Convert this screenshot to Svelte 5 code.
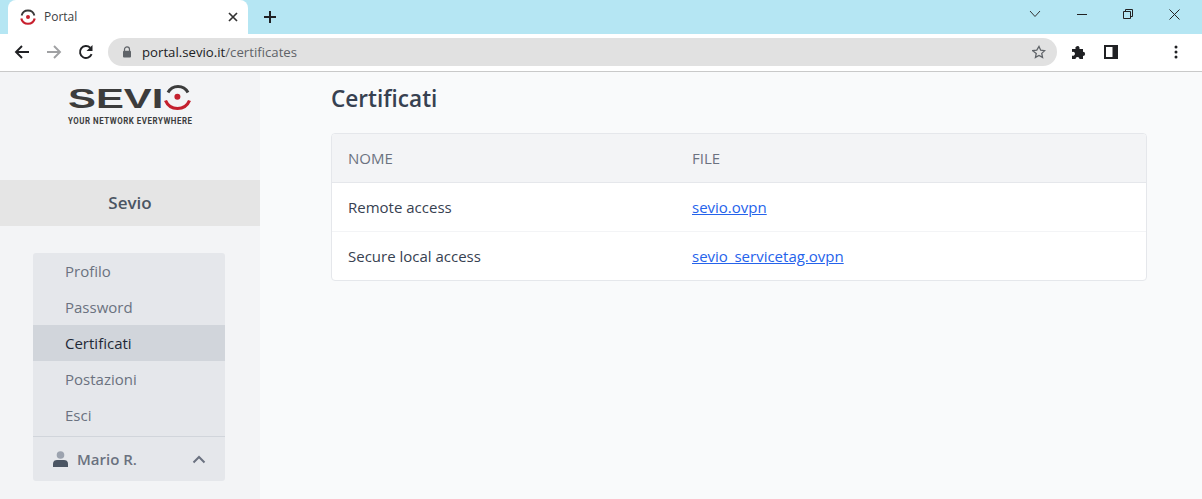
<script>
	let menu = ["Profilo", "Password", "Certificati", "Postazioni", "Esci"];
	let active = "Certificati";
	let certs = [
		["Remote access", "sevio.ovpn"],
		["Secure local access", "sevio_servicetag.ovpn"],
	];
</script>

<div class="window">
	<div class="tabstrip">
		<div class="tab">
			<svg class="favicon" width="16" height="16" viewBox="0 0 16 16">
				<path d="M1.6 6.5A6.6 6.6 0 0 1 14.4 6.5" fill="none" stroke="#3a3a3a" stroke-width="1.8"/>
				<path d="M1.3 9.5A6.9 6.9 0 0 0 14.7 9.5" fill="none" stroke="#c8202e" stroke-width="2.2"/>
				<circle cx="8" cy="8" r="2" fill="#c8202e"/>
			</svg>
			<span class="tabtitle">Portal</span>
			<svg class="tabclose" width="10" height="10" viewBox="0 0 10 10">
				<path d="M1 1L9 9M9 1L1 9" stroke="#333" stroke-width="1.7"/>
			</svg>
		</div>
		<svg class="newtab" width="12" height="12" viewBox="0 0 12 12">
			<path d="M6 0V12M0 6H12" stroke="#202124" stroke-width="2"/>
		</svg>
		<div class="wincontrols">
			<svg width="12" height="8" viewBox="0 0 12 8"><path d="M1 1L6 6.5L11 1" fill="none" stroke="#333" stroke-width="1"/></svg>
			<svg width="10" height="10" viewBox="0 0 10 10"><path d="M0 5.5H10" stroke="#222" stroke-width="1"/></svg>
			<svg width="10" height="10" viewBox="0 0 10 10"><path d="M.5 2.5H7.5V9.5H.5ZM2.5 2.5V.5H9.5V7.5H7.5" fill="none" stroke="#222" stroke-width="1"/></svg>
			<svg width="11" height="11" viewBox="0 0 11 11"><path d="M.5 .5L10.5 10.5M10.5 .5L.5 10.5" stroke="#222" stroke-width="1"/></svg>
		</div>
	</div>

	<div class="toolbar">
		<svg class="navicon" width="16" height="16" viewBox="0 0 16 16"><path d="M15 8H2M8 2L2 8L8 14" fill="none" stroke="#202124" stroke-width="1.9"/></svg>
		<svg class="navicon" width="16" height="16" viewBox="0 0 16 16"><path d="M1 8H14M8 2L14 8L8 14" fill="none" stroke="#a0a1a3" stroke-width="1.9"/></svg>
		<svg class="navicon" width="16" height="16" viewBox="0 0 16 16"><path d="M13.6 10.2A6 6 0 1 1 12.2 3.7" fill="none" stroke="#202124" stroke-width="1.9"/><path d="M14.5 1V7H8.5Z" fill="#202124"/></svg>
		<div class="omnibox">
			<svg width="10" height="12" viewBox="0 0 10 12"><path d="M2.5 5V3.4a2.5 2.5 0 0 1 5 0V5" fill="none" stroke="#5f6368" stroke-width="1.2"/><rect x="1" y="4.8" width="8" height="6.6" rx="1" fill="#5f6368"/></svg>
			<span class="url"><span class="host">portal.sevio.it</span>/certificates</span>
			<svg class="star" width="14" height="14" viewBox="0 0 24 24"><path d="M12 2.5l2.9 6.4 6.9.8-5.1 4.7 1.4 6.9-6.1-3.5-6.1 3.5 1.4-6.9L1.2 9.7l7-.8z" fill="none" stroke="#5f6368" stroke-width="2.2"/></svg>
		</div>
		<svg class="puzzle" width="16" height="16" viewBox="0 0 16 16"><path d="M1 5H4.5A2 2 0 1 1 8.5 3.5V5H12V7.8A2 2 0 1 1 12 12V15H8.5A2 2 0 1 0 4.5 15H1V11.5A2 2 0 1 0 1 8Z" fill="#202124"/></svg>
		<svg class="panel" width="14" height="14" viewBox="0 0 14 14"><path d="M0 0H14V14H0ZM2 2V12H8.5V2Z" fill="#202124" fill-rule="evenodd"/></svg>
		<svg class="kebab" width="4" height="14" viewBox="0 0 4 14"><circle cx="2" cy="2" r="1.5" fill="#202124"/><circle cx="2" cy="7" r="1.5" fill="#202124"/><circle cx="2" cy="12" r="1.5" fill="#202124"/></svg>
	</div>

	<div class="page">
		<aside class="sidebar">
			<div class="logo">
				<svg width="124" height="41" viewBox="0 0 124 41">
					<g transform="scale(1.55 1)">
						<text x="0" y="23" class="logoword">SEVI</text>
					</g>
					<path d="M100 7.5A11.3 11.3 0 0 1 120 7.5" fill="none" stroke="#3c3c3c" stroke-width="3"/>
					<path d="M97.5 15.5A13 13 0 0 0 121.5 15.5" fill="none" stroke="#c4202e" stroke-width="3.2"/>
					<circle cx="109.4" cy="11.7" r="3" fill="#c4202e"/>
					<g transform="scale(0.965 1.12)">
						<text x="0" y="34.8" class="logotag">YOUR NETWORK EVERYWHERE</text>
					</g>
				</svg>
			</div>
			<div class="org">Sevio</div>
			<nav class="menu">
				{#each menu as item}
					<a href="#top" class="item" class:active={item === active}>{item}</a>
				{/each}
				<div class="user">
					<svg width="15" height="16" viewBox="0 0 15 16">
						<circle cx="7.5" cy="4" r="3.8" fill="#9ca3af"/>
						<path d="M0 16V12.5C0 10 2 9 4 9H11C13 9 15 10 15 12.5V16Z" fill="#4b5563"/>
					</svg>
					<span class="username">Mario R.</span>
					<svg class="chevron" width="14" height="9" viewBox="0 0 14 9"><path d="M1.5 7.5L7 2L12.5 7.5" fill="none" stroke="#6b7280" stroke-width="2"/></svg>
				</div>
			</nav>
		</aside>

		<main class="content">
			<h1>Certificati</h1>
			<div class="card">
				<table>
					<thead>
						<tr><th>Nome</th><th>File</th></tr>
					</thead>
					<tbody>
						{#each certs as cert}
							<tr>
								<td>{cert[0]}</td>
								<td><a href="#top">{cert[1]}</a></td>
							</tr>
						{/each}
					</tbody>
				</table>
			</div>
		</main>
	</div>
</div>

<style>
	:global(body) {
		margin: 0;
		overflow: hidden;
	}

	.window {
		width: 1202px;
		height: 499px;
		display: flex;
		flex-direction: column;
		font-family: "Open Sans", "Noto Sans", sans-serif;
		overflow: hidden;
	}

	.tabstrip {
		height: 34px;
		background: #b5e6f3;
		display: flex;
		align-items: flex-end;
		flex: none;
	}

	.tab {
		width: 240px;
		margin-left: 8px;
		height: 34px;
		background: #fff;
		border-radius: 8px 8px 0 0;
		display: flex;
		align-items: center;
		padding: 0 8px 0 12px;
		box-sizing: border-box;
	}

	.tabtitle {
		font-size: 12px;
		color: #3c4043;
		margin: 0 0 2px 8px;
		flex: 1;
	}

	.tabclose {
		margin-right: 2px;
	}

	.newtab {
		margin: 0 0 11px 16px;
	}

	.wincontrols {
		margin-left: auto;
		height: 34px;
		display: flex;
		align-items: center;
		gap: 36px;
		padding: 0 22px 6px 0;
		box-sizing: border-box;
	}

	.toolbar {
		height: 36px;
		padding-bottom: 1px;
		background: #fff;
		border-bottom: 1px solid #c9c9c9;
		display: flex;
		align-items: center;
		flex: none;
	}

	.navicon {
		margin-left: 16px;
		flex: none;
	}

	.navicon:first-child {
		margin-left: 14px;
	}

	.omnibox {
		width: 949px;
		height: 28px;
		margin-left: 14px;
		background: #e1e1e1;
		border-radius: 14px;
		display: flex;
		align-items: center;
		padding: 0 11px 0 14px;
		box-sizing: border-box;
	}

	.url {
		font-size: 13.2px;
		color: #5f6368;
		margin-left: 10px;
		flex: 1;
	}

	.host {
		color: #202124;
	}

	.puzzle {
		margin-left: 14px;
	}

	.panel {
		margin-left: 17px;
	}

	.kebab {
		margin-left: 56px;
	}

	.page {
		flex: 1;
		display: flex;
		background: #f9fafb;
		min-height: 0;
	}

	.sidebar {
		width: 260px;
		background: #f3f4f6;
		flex: none;
	}

	.logo {
		padding: 13px 0 0 68px;
		height: 96px;
		box-sizing: border-box;
	}

	.logo svg {
		display: block;
		overflow: visible;
	}

	.logoword {
		font-family: "Liberation Sans", sans-serif;
		font-weight: 700;
		font-size: 27px;
		fill: #3c3c3c;
	}

	.logotag {
		font-family: "Roboto", sans-serif;
		font-weight: 700;
		font-size: 8.2px;
		letter-spacing: 0.55px;
		fill: #3c3c3c;
	}

	.org {
		margin-top: 12px;
		height: 46px;
		line-height: 46px;
		text-align: center;
		background: #e5e5e5;
		font-size: 17px;
		font-weight: 600;
		color: #4b5563;
	}

	.menu {
		margin: 27px 35px 0 33px;
		background: #e5e7eb;
		border-radius: 3px;
		overflow: hidden;
	}

	.item {
		display: block;
		height: 36px;
		line-height: 37px;
		padding-left: 32px;
		font-size: 15px;
		color: #6b7280;
		text-decoration: none;
	}

	.item.active {
		background: #d1d5db;
		color: #1f2937;
	}

	.user {
		margin-top: 3px;
		height: 45px;
		box-sizing: border-box;
		border-top: 1px solid #d1d5db;
		display: flex;
		align-items: center;
		padding: 0 19px 0 20px;
	}

	.username {
		font-size: 15px;
		font-weight: 600;
		color: #6b7280;
		margin-left: 9px;
		flex: 1;
	}

	.content {
		padding: 0 0 0 71px;
		flex: 1;
	}

	h1 {
		margin: 0;
		height: 61px;
		line-height: 53px;
		font-size: 22.6px;
		font-weight: 600;
		color: #374151;
	}

	.card {
		width: 816px;
		box-sizing: border-box;
		border: 1px solid #e5e7eb;
		border-radius: 4px;
		overflow: hidden;
		background: #fff;
	}

	table {
		width: 100%;
		border-collapse: separate;
		border-spacing: 0;
		table-layout: fixed;
		font-size: 15px;
	}

	th, td {
		text-align: left;
		padding: 0 16px;
		height: 48px;
		box-sizing: border-box;
	}

	th:first-child, td:first-child {
		width: 344px;
	}

	th {
		background: #f3f4f6;
		font-weight: 400;
		text-transform: uppercase;
		color: #6b7280;
		border-bottom: 1px solid #e5e7eb;
		height: 49px;
	}

	td {
		color: #374151;
	}

	tbody tr + tr td {
		border-top: 1px solid #f3f4f6;
		height: 49px;
	}

	td a {
		color: #2563eb;
	}
</style>
